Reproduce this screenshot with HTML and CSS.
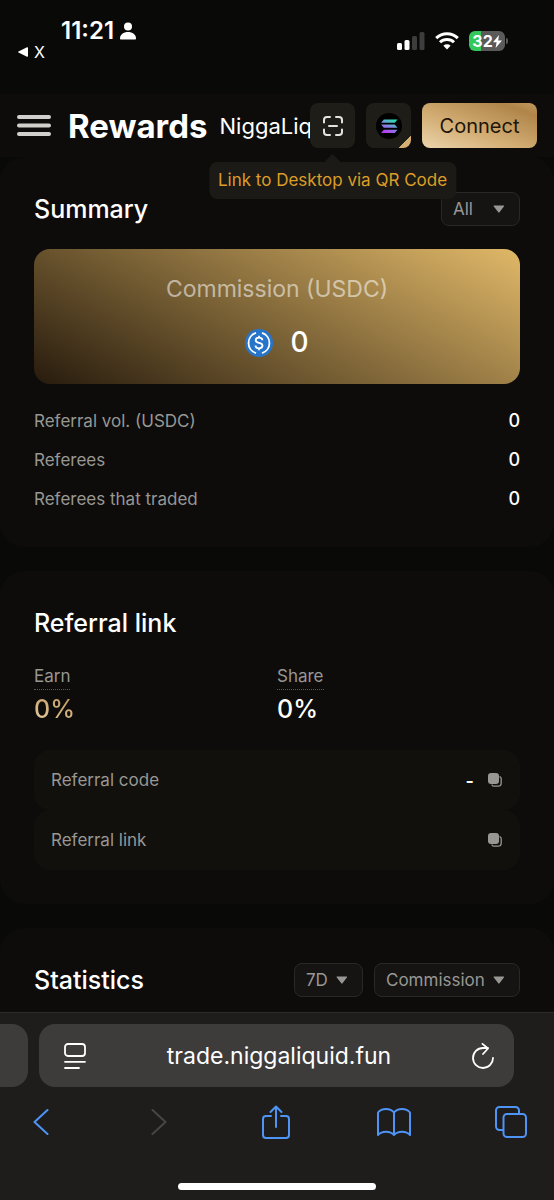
FILE: index.html
```html
<!DOCTYPE html>
<html lang="en">
<head>
<meta charset="utf-8">
<meta name="viewport" content="width=device-width, initial-scale=1">
<title>Rewards</title>
<link rel="stylesheet" href="styles.css">
</head>
<body>
<div class="phone">
  <div class="status">
    <div class="status-left">
      <div class="clock">11:21
        <svg width="16" height="18" viewBox="0 0 16 18" fill="#fff"><circle cx="8" cy="4.5" r="4"/><path d="M0 16.500c0-4 3.500-6.500 8-6.500s8 2.500 8 6.500c0 .6-.4 1-1 1H1c-.6 0-1-.4-1-1z"/></svg>
      </div>
      <a class="back-app" href="#"><svg width="10" height="10" viewBox="0 0 10 10" fill="#fff"><path d="M9 .3c.6-.3 1 0 1 .6v8.200c0 .6-.4.9-1 .6L.5 5.600c-.6-.3-.6-.9 0-1.200z"/></svg>X</a>
    </div>
    <div class="status-right">
      <svg width="28" height="18" viewBox="0 0 28 18"><g fill="#fff"><rect x="0" y="11" width="5" height="7" rx="1.500"/><rect x="7.500" y="8" width="5" height="10" rx="1.500"/></g><g fill="#3d3d3d"><rect x="15" y="4" width="5" height="14" rx="1.500"/><rect x="22.500" y="0" width="5" height="18" rx="1.500"/></g></svg>
      <svg width="24" height="18" viewBox="0 0 24 18" fill="none" stroke="#fff" stroke-width="3"><path d="M1.200 6.200a15.500 15.500 0 0 1 21.600 0"/><path d="M5 10.300a10 10 0 0 1 14 0"/><path d="M12 17.500L8.400 13.800a5.200 5.200 0 0 1 7.200 0z" fill="#fff" stroke="none"/></svg>
      <div class="battery"><span class="battery-level">32<svg width="9" height="13" viewBox="0 0 9 13" fill="#fff"><path d="M6 0L0 7.200h3.600L2.600 13 9 5.500H5.200z"/></svg></span><span class="battery-tip"></span></div>
    </div>
  </div>

  <header class="topbar">
    <button class="menu" type="button" aria-label="Menu"><svg width="34" height="22" viewBox="0 0 34 22" fill="#d2d0cc"><rect y="0" width="34" height="4" rx="2"/><rect y="8.500" width="34" height="4" rx="2"/><rect y="17" width="34" height="4" rx="2"/></svg></button>
    <h1>Rewards</h1>
    <div class="brand">NiggaLiquid</div>
    <div class="qr">
      <button class="square" type="button" aria-label="Link to desktop" aria-describedby="qr-tip"><svg width="20" height="20" viewBox="0 0 20 20" fill="none" stroke="#e4e3e0" stroke-width="2" stroke-linecap="round"><path d="M1 6.500V4a3 3 0 0 1 3-3h3M13 1h3a3 3 0 0 1 3 3v2.500M19 13.500V16a3 3 0 0 1-3 3h-3M7 19H4a3 3 0 0 1-3-3v-2.500M6 10h8"/></svg></button>
      <div class="tip" id="qr-tip" role="tooltip">Link to Desktop via QR Code</div>
    </div>
    <button class="square chain" type="button" aria-label="Solana network"><svg width="26" height="26" viewBox="0 0 26 26"><defs><linearGradient id="sol" gradientUnits="userSpaceOnUse" x1="17" y1="6" x2="11" y2="20"><stop stop-color="#21e5ae"/><stop offset=".5" stop-color="#7c8fe0"/><stop offset="1" stop-color="#b63cf2"/></linearGradient></defs><circle cx="13" cy="13" r="13" fill="#000"/><g fill="url(#sol)"><path d="M7.800 6.500H21.500L18.800 9.700H5.100z"/><path d="M5.100 11.600H18.800L21.500 14.800H7.800z"/><path d="M7.800 16.700H21.500L18.800 19.900H5.100z"/></g></svg></button>
    <button class="connect" type="button">Connect</button>
  </header>

  <main>
    <section class="card">
      <div class="card-head">
        <h2>Summary</h2>
        <div class="picker wide"><select aria-label="Summary period"><option>All</option></select><svg width="12" height="8" viewBox="0 0 12 8"><path d="M1.200.5h9.200c.6 0 .8.5.5 1L6.500 7.300c-.4.5-.8.5-1.200 0L.8 1.500C.4 1 .6.500 1.200.5z"/></svg></div>
      </div>
      <div class="commission">
        <div class="commission-label">Commission (USDC)</div>
        <div class="commission-value">
          <svg width="28" height="28" viewBox="0 0 28 28" fill="none" stroke="#fff"><circle cx="14" cy="14" r="14" fill="#2775ca" stroke="none"/><path stroke-width="1.800" d="M11 3.800a10.700 10.700 0 0 0 0 20.400M17 3.800a10.700 10.700 0 0 1 0 20.400"/><path stroke-width="1.800" d="M17.400 11.300c0-1.700-1.400-2.600-3.400-2.600s-3.300 1-3.300 2.500c0 1.700 1.500 2.200 3.300 2.600 2 .4 3.500 1 3.500 2.800 0 1.700-1.500 2.700-3.500 2.700s-3.500-1-3.500-2.800M14 6.800v2M14 19.200v2"/></svg>
          <span>0</span>
        </div>
      </div>
      <dl class="stats">
        <div><dt>Referral vol. (USDC)</dt><dd>0</dd></div>
        <div><dt>Referees</dt><dd>0</dd></div>
        <div><dt>Referees that traded</dt><dd>0</dd></div>
      </dl>
    </section>

    <section class="card referral">
      <h2>Referral link</h2>
      <div class="rates">
        <div><span class="hint">Earn</span><strong class="gold">0%</strong></div>
        <div><span class="hint">Share</span><strong>0%</strong></div>
      </div>
      <div class="row"><span>Referral code</span><b>-</b><button class="copy" type="button" aria-label="Copy referral code"><svg width="14" height="14" viewBox="0 0 14 14"><rect width="11" height="11" rx="3" fill="#989794"/><path d="M12 3.800c.8.4 1.200 1 1.200 2V10a3.200 3.200 0 0 1-3.200 3.200H6c-1 0-1.600-.4-2-1.200" fill="none" stroke="#989794" stroke-width="1.300" stroke-linecap="round"/></svg></button></div>
      <div class="row"><span>Referral link</span><button class="copy" type="button" aria-label="Copy referral link"><svg width="14" height="14" viewBox="0 0 14 14"><rect width="11" height="11" rx="3" fill="#989794"/><path d="M12 3.800c.8.4 1.200 1 1.200 2V10a3.200 3.200 0 0 1-3.200 3.200H6c-1 0-1.600-.4-2-1.200" fill="none" stroke="#989794" stroke-width="1.300" stroke-linecap="round"/></svg></button></div>
    </section>

    <section class="card statistics">
      <div class="card-head">
        <h2>Statistics</h2>
        <div class="pickers">
          <div class="picker"><select aria-label="Statistics period"><option>7D</option></select><svg width="12" height="8" viewBox="0 0 12 8"><path d="M1.200.5h9.200c.6 0 .8.5.5 1L6.500 7.300c-.4.5-.8.5-1.200 0L.8 1.500C.4 1 .6.500 1.200.5z"/></svg></div>
          <div class="picker"><select aria-label="Statistics metric"><option>Commission</option></select><svg width="12" height="8" viewBox="0 0 12 8"><path d="M1.200.5h9.200c.6 0 .8.5.5 1L6.500 7.300c-.4.5-.8.5-1.200 0L.8 1.500C.4 1 .6.500 1.200.5z"/></svg></div>
        </div>
      </div>
    </section>
  </main>

  <footer class="browser">
    <div class="tabs">
      <div class="tab-edge"></div>
      <div class="address">
        <button type="button" aria-label="Page menu"><svg width="22" height="26" viewBox="0 0 22 26" fill="none" stroke="#fff" stroke-width="1.800" stroke-linecap="round"><rect x="1" y="1" width="20" height="12" rx="3"/><path d="M1 18.800h20M1 25h14"/></svg></button>
        <a href="#">trade.niggaliquid.fun</a>
        <button type="button" aria-label="Reload"><svg width="22" height="26" viewBox="0 0 22 26" fill="none" stroke="#fff" stroke-width="1.800" stroke-linecap="round" stroke-linejoin="round"><path d="M21 14.800A10 10 0 1 1 11 5h5M10.500.900L16 5.500 11 11"/></svg></button>
      </div>
    </div>
    <nav class="tools" aria-label="Browser">
      <button type="button" aria-label="Back"><svg width="16" height="26" viewBox="0 0 16 26" stroke="#4d94f5"><path d="M14.500 1L1.500 13l13 12"/></svg></button>
      <button type="button" aria-label="Forward"><svg width="16" height="26" viewBox="0 0 16 26" stroke="#474644"><path d="M1.500 1l13 12-13 12"/></svg></button>
      <button type="button" aria-label="Share"><svg width="28" height="34" viewBox="0 0 28 34" stroke="#4d94f5"><path d="M9 11H4a3 3 0 0 0-3 3v16a3 3 0 0 0 3 3h20a3 3 0 0 0 3-3V14a3 3 0 0 0-3-3h-5M14 22V1.500M8.500 7L14 1.500 19.500 7"/></svg></button>
      <button type="button" aria-label="Bookmarks"><svg width="34" height="28" viewBox="0 0 34 28" stroke="#4d94f5"><path d="M17 4.500C15 2 12 1 9 1S3 2 1 4.500V27c2-2.200 5-3.200 8-3.200s6 1 8 3.200c2-2.200 5-3.200 8-3.200s6 1 8 3.200V4.500C31 2 28 1 25 1s-6 1-8 3.500zV27"/></svg></button>
      <button type="button" aria-label="Tabs"><svg width="32" height="32" viewBox="0 0 32 32" stroke="#4d94f5"><rect x="8.500" y="8" width="22.500" height="23" rx="3.500"/><path d="M8 24H4.500A3.500 3.500 0 0 1 1 20.500v-16A3.500 3.500 0 0 1 4.500 1h16A3.500 3.500 0 0 1 24 4.500V8"/></svg></button>
    </nav>
    <div class="home"></div>
  </footer>
</div>
</body>
</html>
```
FILE: styles.css
```css
* { box-sizing: border-box; }
body {
  margin: 0;
  background: #090907;
  color: #fff;
  font-family: Inter, "Noto Sans", sans-serif;
  font-size: 18px;
}
button { border: 0; padding: 0; background: none; color: inherit; font: inherit; }
svg { display: block; flex: none; }
h1, h2, dl, dd { margin: 0; }
a { color: inherit; text-decoration: none; }

.phone { display: flex; flex-direction: column; min-height: 100vh; }

.status {
  display: flex;
  justify-content: space-between;
  height: 94px;
  padding: 18px 46px 0 18px;
}
.clock {
  display: flex;
  align-items: center;
  gap: 6px;
  padding-left: 43px;
  font-size: 24px;
  font-weight: 600;
  line-height: 26px;
}
.back-app {
  display: flex;
  align-items: center;
  gap: 6px;
  font-size: 16px;
  line-height: 16px;
}
.status-right { display: flex; align-items: center; align-self: flex-start; gap: 10px; padding-top: 13px; }
.battery { display: flex; align-items: center; gap: 1px; }
.battery-level {
  display: flex;
  align-items: center;
  justify-content: center;
  width: 36px;
  height: 20px;
  border-radius: 6px;
  background: linear-gradient(90deg, #34c759 32%, #5a5a5a 32%);
  font-size: 16px;
  font-weight: 700;
}
.battery-tip { width: 2px; height: 6px; border-radius: 0 2px 2px 0; background: #5a5a5a; }

.topbar {
  display: flex;
  align-items: center;
  height: 63px;
  padding: 0 17px;
  background: #0d0c0a;
}
h1 { margin: 0 12px 0 17px; font-size: 33px; font-weight: 700; line-height: 44px; }
.brand { flex: 1 1 0; overflow: hidden; min-width: 0; font-size: 22px; line-height: 32px; white-space: nowrap; }
.qr { position: relative; }
.square {
  display: grid;
  place-items: center;
  width: 45px;
  height: 45px;
  border-radius: 8px;
  background: #1f1d18;
}
.chain {
  margin: 0 11px;
  background: linear-gradient(135deg, transparent 86%, #d5ae74 86%) #1f1d18;
}
.connect {
  width: 115px;
  height: 45px;
  border-radius: 8px;
  background: linear-gradient(20deg, #ecd5ac 0%, #d3ae75 40%, #b0854a 85%, #c39a60 100%);
  color: #201507;
  font-size: 20px;
}
.tip {
  position: absolute;
  z-index: 2;
  top: 59px;
  left: 50%;
  transform: translateX(-50%);
  padding: 0 9px;
  border-radius: 8px;
  background: #1b1a16;
  color: #dd9d27;
  font-size: 17px;
  line-height: 37px;
  white-space: nowrap;
}
.tip::before {
  content: "";
  position: absolute;
  top: -8px;
  left: 50%;
  margin-left: -9px;
  border: 9px solid transparent;
  border-top: 0;
  border-bottom-color: #1b1a16;
}

main { display: flex; flex: 1; flex-direction: column; gap: 24px; }
.card { padding: 34px; border-radius: 24px; background: #0d0c0a; }
.card-head { display: flex; align-items: center; justify-content: space-between; }
h2 { font-size: 25px; font-weight: 500; line-height: 36px; }

.picker { display: grid; align-items: center; }
.picker > * { grid-area: 1 / 1; }
.picker select {
  height: 34px;
  padding: 0 34px 0 11px;
  border: 1px solid #292825;
  border-radius: 8px;
  appearance: none;
  background: #151412;
  color: #989794;
  font: inherit;
  font-size: 17px;
}
.picker svg { justify-self: end; margin-right: 15px; fill: #989794; pointer-events: none; }
.wide select { width: 79px; }
.pickers { display: flex; gap: 11px; }

.commission {
  display: flex;
  flex-direction: column;
  align-items: center;
  gap: 20px;
  margin-top: 22px;
  padding: 24px 0 24px;
  border-radius: 16px;
  background: linear-gradient(28deg, #271b0d 0%, #e0b868 100%);
}
.commission-label { color: rgba(255, 255, 255, .54); font-size: 23px; line-height: 32px; }
.commission-value { display: flex; align-items: center; gap: 17px; font-size: 28px; font-weight: 500; line-height: 35px; }

.stats { display: grid; gap: 11px; margin-top: 23px; }
.stats div { display: flex; justify-content: space-between; line-height: 28px; }
dt, .hint, .row span { color: #989794; font-size: 17px; }
dd { font-weight: 500; }

.rates { display: grid; grid-template-columns: 1fr 1fr; margin: 22px 0 23px; }
.rates div { display: flex; flex-direction: column; align-items: flex-start; gap: 2px; }
.hint { border-bottom: 1px dotted #5a5956; line-height: 26px; }
.rates strong { font-size: 25px; font-weight: 500; line-height: 35px; }
.gold { background: linear-gradient(20deg, #ecd5ac, #b88e52); background-clip: text; color: transparent; }
.row {
  display: flex;
  align-items: center;
  height: 60px;
  padding: 0 18px 0 17px;
  border-radius: 16px;
  background: #11100d;
}
.row span { flex: 1; }
.row b { margin-right: 14px; font-weight: 600; }
.statistics { flex: 1; padding-bottom: 14px; border-radius: 24px 24px 0 0; }

.browser { border-top: 1px solid #2c2b29; background: #1e1d1c; }
.tabs { display: flex; gap: 11px; padding: 11px 40px 0 0; }
.tab-edge { width: 28px; height: 63px; border-radius: 0 16px 16px 0; background: #3d3c3a; }
.address {
  display: flex;
  flex: 1;
  align-items: center;
  justify-content: space-between;
  padding: 0 20px 0 25px;
  border-radius: 16px;
  background: #3d3c3a;
  font-size: 23px;
}
.tools { display: flex; align-items: center; justify-content: space-between; height: 70px; padding: 0 26px 0 24px; }
.tools button { display: grid; place-items: center; width: 34px; }
.tools svg { fill: none; stroke-width: 2; stroke-linecap: round; stroke-linejoin: round; }
.home { width: 198px; height: 7px; margin: 26px auto 11px; border-radius: 4px; background: #fff; }
```
